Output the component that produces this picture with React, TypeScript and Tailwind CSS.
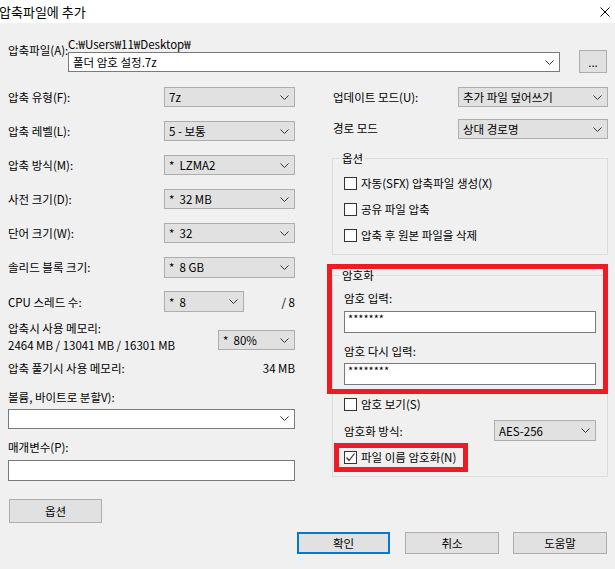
import type { ReactNode } from 'react'

const font = { fontFamily: '"Noto Sans CJK KR", "Noto Sans", sans-serif' }

function Chevron() {
  return (
    <svg width="9" height="5" viewBox="0 0 9 5" className="shrink-0">
      <path d="M0.5 0.5 L4.5 4.5 L8.5 0.5" fill="none" stroke="#333" strokeWidth="1" />
    </svg>
  )
}

function Combo({ value, className, white }: { value?: string; className?: string; white?: boolean }) {
  return (
    <div
      className={`flex items-center justify-between pl-[4px] pr-[5px] border ${
        white ? 'bg-white border-[#7a7a7a]' : 'bg-[#e1e1e1] border-[#adadad]'
      } ${className ?? ''}`}
    >
      <span className="whitespace-pre leading-[14px]">{value}</span>
      <Chevron />
    </div>
  )
}

function Check({ label, checked }: { label: string; checked?: boolean }) {
  return (
    <div className="flex items-center h-[14px] gap-[4px]">
      <div className="w-[13px] h-[13px] bg-white border border-[#333] flex items-center justify-center">
        {checked && (
          <svg width="11" height="11" viewBox="0 0 11 11">
            <path d="M1.5 5.5 L4 8.5 L9.5 1.5" fill="none" stroke="#333" strokeWidth="1.2" />
          </svg>
        )}
      </div>
      <span className="leading-[14px] whitespace-nowrap">{label}</span>
    </div>
  )
}

function Row({ label, children }: { label: string; children: ReactNode }) {
  return (
    <div className="flex items-center justify-between h-[20px]">
      <span className="leading-[14px] whitespace-nowrap">{label}</span>
      {children}
    </div>
  )
}

function Btn({ label, primary, className }: { label: string; primary?: boolean; className?: string }) {
  return (
    <div
      className={`flex items-center justify-center bg-[#e1e1e1] ${
        primary ? 'border-2 border-[#0078d7]' : 'border border-[#adadad]'
      } ${className ?? ''}`}
    >
      <span className="leading-[14px]">{label}</span>
    </div>
  )
}

export default function App() {
  return (
    <div className="relative w-[615px] h-[569px] bg-[#f0f0f0] text-[11.5px] text-black overflow-hidden" style={font}>
      {/* title bar */}
      <div className="h-[23px] bg-white flex items-center justify-between pr-[5px]">
        <span className="text-[13px] leading-[16px] -ml-[1px]">압축파일에 추가</span>
        <svg width="10" height="10" viewBox="0 0 10 10">
          <path d="M0.5 0.5 L9.5 9.5 M9.5 0.5 L0.5 9.5" stroke="#000" strokeWidth="1" />
        </svg>
      </div>

      {/* archive path */}
      <div className="flex items-start pt-[14px] pl-[8px] h-[64px]">
        <span className="w-[60px] mt-[6px] leading-[14px] whitespace-nowrap">압축파일(A):</span>
        <div className="flex flex-col">
          <span className="leading-[14px] h-[14px] whitespace-nowrap">C:₩Users₩11₩Desktop₩</span>
          <div className="mt-[1px] w-[492px] h-[20px] bg-white border border-[#7a7a7a] flex items-center justify-between pl-[4px] pr-[5px]">
            <span className="leading-[14px]">폴더 암호 설정.7z</span>
            <Chevron />
          </div>
        </div>
        <Btn label="..." className="ml-[19px] mt-[13px] w-[28px] h-[23px]" />
      </div>

      <div className="flex pl-[8px] h-[436px]">
        {/* left column */}
        <div className="w-[287px] flex flex-col">
          <div className="flex flex-col gap-[14px]">
            <Row label="압축 유형(F):">
              <Combo value="7z" className="w-[131px] h-[20px]" />
            </Row>
            <Row label="압축 레벨(L):">
              <Combo value="5 - 보통" className="w-[131px] h-[20px]" />
            </Row>
            <Row label="압축 방식(M):">
              <Combo value="*  LZMA2" className="w-[131px] h-[20px]" />
            </Row>
            <Row label="사전 크기(D):">
              <Combo value="*  32 MB" className="w-[131px] h-[20px]" />
            </Row>
            <Row label="단어 크기(W):">
              <Combo value="*  32" className="w-[131px] h-[20px]" />
            </Row>
            <Row label="솔리드 블록 크기:">
              <Combo value="*  8 GB" className="w-[131px] h-[21px]" />
            </Row>
            <div className="flex items-center h-[21px]">
              <span className="w-[156px] leading-[14px] whitespace-nowrap">CPU 스레드 수:</span>
              <Combo value="*  8" className="w-[80px] h-[21px]" />
              <span className="flex-1 text-right leading-[14px] whitespace-pre">/ 8</span>
            </div>
          </div>

          <div className="flex justify-between mt-[8px]">
            <div className="flex flex-col">
              <span className="leading-[17px] whitespace-nowrap">압축시 사용 메모리:</span>
              <span className="leading-[17px] whitespace-nowrap">2464 MB / 13041 MB / 16301 MB</span>
            </div>
            <Combo value="*  80%" className="mt-[10px] w-[77px] h-[20px]" />
          </div>

          <div className="flex justify-between mt-[6px] leading-[17px]">
            <span>압축 풀기시 사용 메모리:</span>
            <span>34 MB</span>
          </div>

          <span className="mt-[12px] leading-[17px]">볼륨, 바이트로 분할V):</span>
          <Combo white className="mt-[3px] w-[287px] h-[20px]" />

          <span className="mt-[10px] leading-[17px]">매개변수(P):</span>
          <div className="mt-[4px] w-[287px] h-[22px] bg-white border border-[#7a7a7a]" />

          <Btn label="옵션" className="mt-[18px] ml-[1px] w-[93px] h-[24px]" />
        </div>

        {/* right column */}
        <div className="ml-[37px] w-[276px] flex flex-col">
          <div className="flex items-center justify-between h-[20px]">
            <span className="pl-[1px] leading-[14px] whitespace-nowrap">업데이트 모드(U):</span>
            <Combo value="추가 파일 덮어쓰기" className="w-[150px] h-[20px]" />
          </div>
          <div className="flex items-center justify-between h-[20px] mt-[12px]">
            <span className="pl-[1px] leading-[14px] -mt-[3px]">경로 모드</span>
            <Combo value="상대 경로명" className="w-[150px] h-[20px]" />
          </div>

          <fieldset className="mt-[12px] h-[104px] border border-[#dcdcdc] pl-[11px]">
            <legend className="ml-[-4px] px-[2px] leading-[14px]">옵션</legend>
            <div className="flex flex-col gap-[12px] mt-[11px]">
              <Check label="자동(SFX) 압축파일 생성(X)" />
              <Check label="공유 파일 압축" />
              <Check label="압축 후 원본 파일을 삭제" />
            </div>
          </fieldset>

          <fieldset className="mt-[13px] h-[209px] border border-[#dcdcdc] pl-[11px] pr-[11px]">
            <legend className="ml-[-4px] px-[2px] leading-[14px]">암호화</legend>
            <div className="flex flex-col">
              <span className="mt-[9px] leading-[14px]">암호 입력:</span>
              <div className="mt-[6px] h-[22px] bg-white border border-[#7a7a7a] pl-[3px] pt-[1px] leading-[10px] text-[11px]">
                *******
              </div>
              <span className="mt-[11px] leading-[14px]">암호 다시 입력:</span>
              <div className="mt-[5px] h-[22px] bg-white border border-[#7a7a7a] pl-[3px] pt-[1px] leading-[10px] text-[11px]">
                ********
              </div>
              <div className="mt-[12px]">
                <Check label="암호 보기(S)" />
              </div>
              <div className="mt-[9px] flex items-center justify-between h-[21px]">
                <span className="leading-[14px]">암호화 방식:</span>
                <Combo value="AES-256" className="w-[102px] h-[21px]" />
              </div>
              <div className="mt-[9px]">
                <Check label="파일 이름 암호화(N)" checked />
              </div>
            </div>
          </fieldset>
        </div>
      </div>

      {/* bottom buttons */}
      <div className="flex justify-end pr-[8px] mt-[9px] gap-[14px]">
        <Btn label="확인" primary className="w-[93px] h-[22px] mr-[1px]" />
        <Btn label="취소" className="w-[94px] h-[22px]" />
        <Btn label="도움말" className="w-[94px] h-[22px]" />
      </div>

      {/* red annotation boxes */}
      <div className="absolute left-[327px] top-[264px] w-[281px] h-[130px] border-[5px] border-[#ed1c24]" />
      <div className="absolute left-[334px] top-[443px] w-[134px] h-[29px] border-[5px] border-[#ed1c24]" />
    </div>
  )
}
